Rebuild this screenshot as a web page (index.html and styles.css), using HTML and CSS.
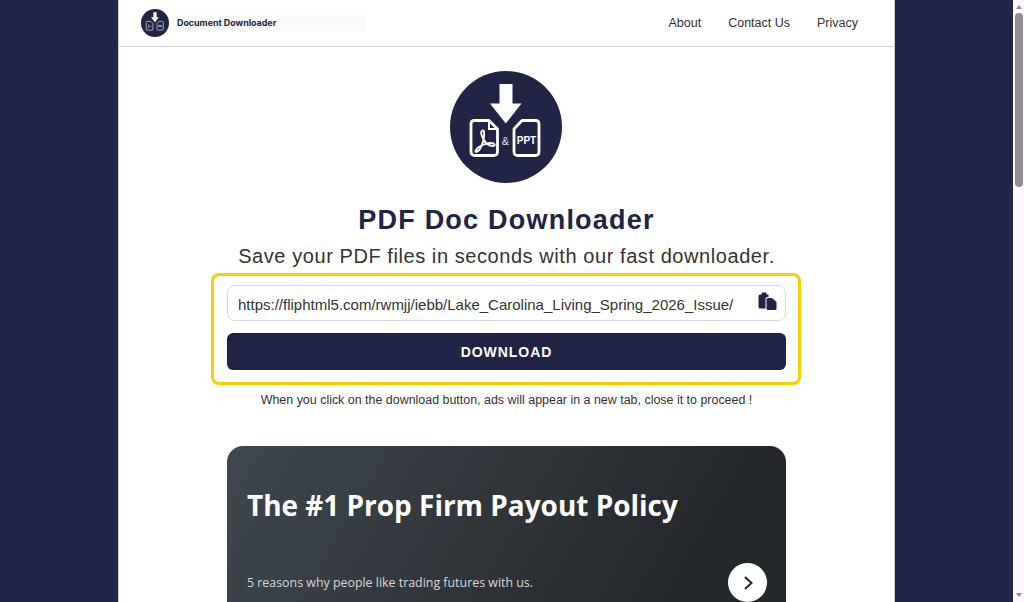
FILE: index.html
```html
<!DOCTYPE html>
<html lang="en">
<head>
  <meta charset="UTF-8">
  <meta name="viewport" content="width=device-width, initial-scale=1.0">
  <title>PDF Doc Downloader</title>
  <link rel="stylesheet" href="styles.css">
</head>
<body>
  <div class="view">
    <div class="page">
      <div class="nav">
        <div class="brand">
          <svg class="brand-icon" viewBox="0 0 112 112">
            <circle cx="56" cy="56" r="56" fill="#212444"/>
            <path d="M49.5 13H62.5V32.5H71.5L55.8 52.5L40 32.5H49.5Z" fill="#fff"/>
            <path d="M24 49.5H39L47.5 58V80.5Q47.5 84.5 43.5 84.5H25Q21 84.5 21 80.5V52.5Q21 49.5 24 49.5Z" fill="none" stroke="#d5d6e0" stroke-width="2.8" stroke-linejoin="round"/>
            <path d="M32 60L28 78M30 70H42" fill="none" stroke="#b9bbcb" stroke-width="2.4"/>
            <path d="M72 49.5H86Q89 49.5 89 52.5V80.5Q89 84.5 85 84.5H68Q64 84.5 64 80.5V58Z" fill="none" stroke="#d5d6e0" stroke-width="2.8" stroke-linejoin="round"/>
            <path d="M69 68H84" fill="none" stroke="#b9bbcb" stroke-width="6"/>
          </svg>
          <div class="brand-name">Document Downloader</div>
        </div>
        <div class="links">
          <a href="#">About</a>
          <a href="#">Contact Us</a>
          <a href="#">Privacy</a>
        </div>
      </div>

      <div class="main">
        <svg class="hero-icon" viewBox="0 0 112 112">
          <circle cx="56" cy="56" r="56" fill="#212444"/>
          <path d="M49.5 13H62.5V32.5H71.5L55.8 52.5L40 32.5H49.5Z" fill="#fff"/>
          <path d="M24.5 49.5H39L47.5 58V80.5Q47.5 84.5 43.5 84.5H25Q21 84.5 21 80.5V53Q21 49.5 24.5 49.5Z" fill="none" stroke="#fff" stroke-width="2.8" stroke-linejoin="round"/>
          <path d="M39 49.5V58H47.5" fill="none" stroke="#fff" stroke-width="2"/>
          <path d="M32 60C30 61 32 66 34 69C36 73 39 75 43 75C46 75 45 72 41 72C36 72 28 75 26 79C24 82 28 81 30 78C32 75 35 66 34 61C34 59 32 59 32 60Z" fill="none" stroke="#fff" stroke-width="1.9"/>
          <path d="M72 49.5H85.5Q89 49.5 89 53V80.5Q89 84.5 85 84.5H68Q64 84.5 64 80.5V58Z" fill="none" stroke="#fff" stroke-width="2.8" stroke-linejoin="round"/>
          <text x="55.5" y="73.5" class="logo-amp">&amp;</text>
          <text x="76.5" y="72.5" class="logo-ppt">PPT</text>
        </svg>
        <h1>PDF Doc Downloader</h1>
        <p class="sub">Save your PDF files in seconds with our fast downloader.</p>

        <div class="box">
          <div class="inp">
            <span class="url">https://fliphtml5.com/rwmjj/iebb/Lake_Carolina_Living_Spring_2026_Issue/</span>
            <svg class="paste" width="19" height="19" viewBox="0 0 19 19">
              <path d="M4 0.5H8.5V2.5H10.5V5H9.5Q7.5 5 7.5 7V16.5H2Q0.5 16.5 0.5 15V4Q0.5 2.5 2 2.5H3.5Z" fill="#212444"/>
              <path d="M10 6H14L18.5 10V16.5Q18.5 18 17 18H10Q8.5 18 8.5 16.5V7.5Q8.5 6 10 6Z" fill="#212444"/>
            </svg>
          </div>
          <button class="but">DOWNLOAD</button>
        </div>

        <p class="note">When you click on the download button, ads will appear in a new tab, close it to proceed !</p>

        <div class="ad">
          <div class="ad-title">The #1 Prop Firm Payout Policy</div>
          <div class="ad-foot">
            <span class="ad-text">5 reasons why people like trading futures with us.</span>
            <span class="ad-go">
              <svg width="14" height="16" viewBox="0 0 14 16"><path d="M4 2L10.5 8L4 14" fill="none" stroke="#25282b" stroke-width="2"/></svg>
            </span>
          </div>
        </div>
      </div>
    </div>
  </div>

  <div class="scroll">
    <div class="arrow-up"></div>
    <div class="thumb"></div>
    <div class="arrow-down"></div>
  </div>
</body>
</html>
```

FILE: styles.css
```css
* {
  padding: 0;
  margin: 0;
  box-sizing: border-box;
}

html, body {
  height: 100%;
  overflow: hidden;
}

body {
  display: flex;
  background: #212444;
  font-family: "Liberation Sans", Arial, sans-serif;
}

.logo-amp {
  font: 11px "Liberation Sans", sans-serif;
  fill: #e4e4ea;
  text-anchor: middle;
}

.logo-ppt {
  font: bold 10px "Liberation Sans", sans-serif;
  fill: #fff;
  text-anchor: middle;
}

.view {
  flex: 1;
  min-width: 0;
  display: flex;
  justify-content: center;
}

.page {
  width: 777px;
  height: 900px;
  flex: none;
  background: #fff;
  border-left: 1px solid #ccc;
  border-right: 1px solid #ccc;
}

.nav {
  height: 47px;
  display: flex;
  align-items: center;
  justify-content: space-between;
  padding: 0 36px 1px 22px;
  border-bottom: 1px solid #d8d8d8;
}

.brand {
  display: flex;
  align-items: center;
  gap: 6px;
}

.brand-icon {
  width: 28px;
  height: 28px;
}

.brand-name {
  width: 191px;
  height: 16px;
  padding-left: 2px;
  background: #fafafa;
  color: #212444;
  font: 700 8.9px/16px Inter, sans-serif;
}

.links {
  display: flex;
  gap: 27px;
}

.links a {
  color: #333;
  font-size: 12.5px;
  text-decoration: none;
}

.main {
  display: flex;
  flex-direction: column;
  align-items: center;
  padding-top: 24px;
}

.hero-icon {
  width: 112px;
  height: 112px;
  margin-right: 2px;
}

h1 {
  margin-top: 21px;
  color: #212444;
  font-size: 27px;
  line-height: 32px;
  letter-spacing: 1.22px;
}

.sub {
  margin-top: 8px;
  color: #333;
  font-size: 20px;
  line-height: 24px;
  letter-spacing: 0.57px;
}

.box {
  width: 590px;
  height: 112px;
  margin-top: 5px;
  margin-right: 1px;
  padding: 9px 12px 9px 13px;
  display: flex;
  flex-direction: column;
  gap: 12px;
  border: 3px solid #fc0;
  border-radius: 8px;
}

.inp {
  height: 36px;
  flex: none;
  display: flex;
  align-items: center;
  justify-content: space-between;
  padding: 2px 8px 0 10px;
  border: 1px solid #d8d8d8;
  border-radius: 8px;
}

.paste {
  margin-top: -5px;
}

.url {
  color: #333;
  font-size: 15px;
  white-space: nowrap;
}

.but {
  height: 37px;
  flex: none;
  background: #212444;
  color: #fff;
  border: none;
  border-radius: 6px;
  font-family: inherit;
  font-size: 14px;
  font-weight: bold;
  letter-spacing: 0.95px;
}

.note {
  margin-top: 8px;
  color: #333;
  font-size: 12.45px;
  line-height: 15px;
}

.ad {
  width: 559px;
  height: 260px;
  margin-top: 38px;
  padding: 42px 19px 0 20px;
  background: linear-gradient(120deg, #3f474f, #25282b 75%);
  border-radius: 16px;
  color: #fff;
  font-family: "Open Sans", sans-serif;
}

.ad-title {
  font-size: 27.95px;
  font-weight: 700;
  line-height: 34px;
}

.ad-foot {
  margin-top: 41px;
  display: flex;
  align-items: center;
  justify-content: space-between;
}

.ad-text {
  color: #d6d8da;
  font-size: 12.4px;
}

.ad-go {
  width: 39px;
  height: 39px;
  display: flex;
  align-items: center;
  justify-content: center;
  background: #fff;
  border-radius: 50%;
}

.scroll {
  width: 11px;
  flex: none;
  display: flex;
  flex-direction: column;
  align-items: center;
  background: #fafafa;
}

.arrow-up {
  margin-top: 5px;
  border: 3.5px solid transparent;
  border-top: 0;
  border-bottom: 4px solid #8f8f8f;
}

.thumb {
  width: 8px;
  height: 174px;
  margin-top: 4px;
  background: #8f8f8f;
  border-radius: 4px;
}

.arrow-down {
  margin-top: auto;
  margin-bottom: 5px;
  border: 3.5px solid transparent;
  border-bottom: 0;
  border-top: 4px solid #8f8f8f;
}
```
